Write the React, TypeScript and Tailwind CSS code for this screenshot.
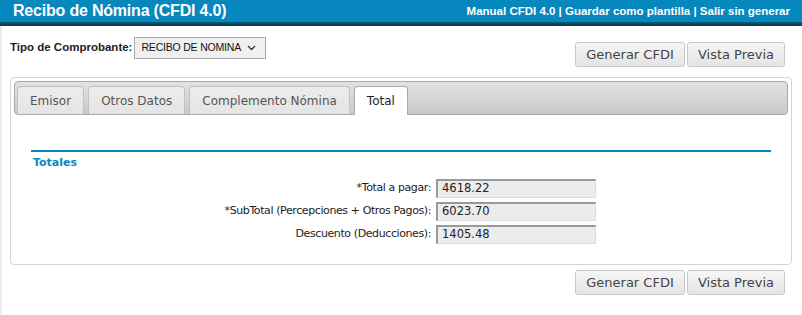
import React from "react";

const tabs = ["Emisor", "Otros Datos", "Complemento Nómina", "Total"];

const totales = [
  { label: "*Total a pagar:", value: "4618.22" },
  { label: "*SubTotal (Percepciones + Otros Pagos):", value: "6023.70" },
  { label: "Descuento (Deducciones):", value: "1405.48" },
];

const Botones = () => (
  <div className="flex gap-[2px]">
    <button className="h-[25px] w-[110px] rounded-[3px] border border-[#c8c8c8] bg-gradient-to-b from-[#f6f6f6] to-[#e4e4e4] text-[13px] text-[#444]">
      Generar CFDI
    </button>
    <button className="h-[25px] w-[98px] rounded-[3px] border border-[#c8c8c8] bg-gradient-to-b from-[#f6f6f6] to-[#e4e4e4] text-[13px] text-[#444]">
      Vista Previa
    </button>
  </div>
);

export default function App() {
  return (
    <div className="w-[802px] h-[315px] bg-white overflow-hidden" style={{ fontFamily: "'DejaVu Sans', Verdana, sans-serif" }}>
      {/* encabezado */}
      <div className="h-[22px] bg-[#0687bd] flex items-center justify-between pl-[13px] pr-[12px]">
        <h1 className="text-white font-bold text-[16px] font-['Liberation_Sans',sans-serif] tracking-[-0.2px]">
          Recibo de Nómina (CFDI 4.0)
        </h1>
        <div className="text-white font-bold text-[11.5px] font-['Liberation_Sans',sans-serif] mt-[2px]">
          Manual CFDI 4.0 | Guardar como plantilla | Salir sin generar
        </div>
      </div>
      <div className="h-[4px] bg-gradient-to-b from-[#0b5a78] to-[#083a50]" />

      <div className="border-l-2 border-[#ececec] h-[289px] pl-[8px] pr-[10px]">
        <div className="flex justify-between items-start pt-[11px]">
          <div className="flex items-center gap-[2px] font-['Liberation_Sans',sans-serif]">
            <span className="text-[11.5px] font-bold text-[#222]">Tipo de Comprobante:</span>
            <div className="h-[22px] w-[132px] border border-[#aaa] bg-[#f0f0f0] flex items-center justify-between pl-[6px] pr-[9px] text-[10.5px] text-[#111] whitespace-nowrap">
              <span className="tracking-[-0.2px]">RECIBO DE NOMINA</span>
              <svg className="shrink-0" width="9" height="6" viewBox="0 0 9 6" fill="none" stroke="#333" strokeWidth="1.3">
                <path d="M1 1l3.5 3.5L8 1" />
              </svg>
            </div>
          </div>
          <div className="mt-[5px] mr-[7px]">
            <Botones />
          </div>
        </div>

        {/* panel */}
        <div className="mt-[10px] border border-[#d4d4d4] rounded-[4px] p-[3px] h-[188px]">
          <div className="h-[34px] rounded-[4px] border border-[#aaa] bg-gradient-to-b from-[#e2e2e2] to-[#c9c9c9] flex items-end gap-[4px] px-[2px]">
            {tabs.map((t) => (
              <div
                key={t}
                className={
                  t === "Total"
                    ? "h-[29px] -mb-px px-[12px] rounded-t-[4px] border border-b-0 border-[#aaa] bg-white text-[12px] text-[#222] flex items-center"
                    : "h-[28px] px-[12px] rounded-t-[4px] border border-b-0 border-[#c2c2c2] bg-gradient-to-b from-[#ececec] to-[#e4e4e4] text-[12px] text-[#555] flex items-center"
                }
              >
                {t}
              </div>
            ))}
          </div>

          <div className="pl-[17px] pr-[17px] pt-[35px]">
            <div className="h-[2px] bg-[#0b87bf]" />
            <div className="text-[11px] font-bold text-[#0b87bf] pl-[2px] pt-[3px]">Totales</div>
            <div className="flex flex-col gap-[4px] mt-[7px]">
              {totales.map((r) => (
                <div key={r.label} className="flex items-center">
                  <span className="w-[405px] text-right text-[11px] text-[#222] pr-[5px] tracking-[-0.4px]">{r.label}</span>
                  <div className="w-[160px] h-[19px] bg-[#ececec] border-t-2 border-l-2 border-[#999] border-r border-b border-r-[#ddd] border-b-[#ddd] text-[11.5px] text-[#222] pl-[4px] flex items-center">
                    {r.value}
                  </div>
                </div>
              ))}
            </div>
          </div>
        </div>

        <div className="flex justify-end mt-[5px] mr-[7px]">
          <Botones />
        </div>
      </div>
    </div>
  );
}
